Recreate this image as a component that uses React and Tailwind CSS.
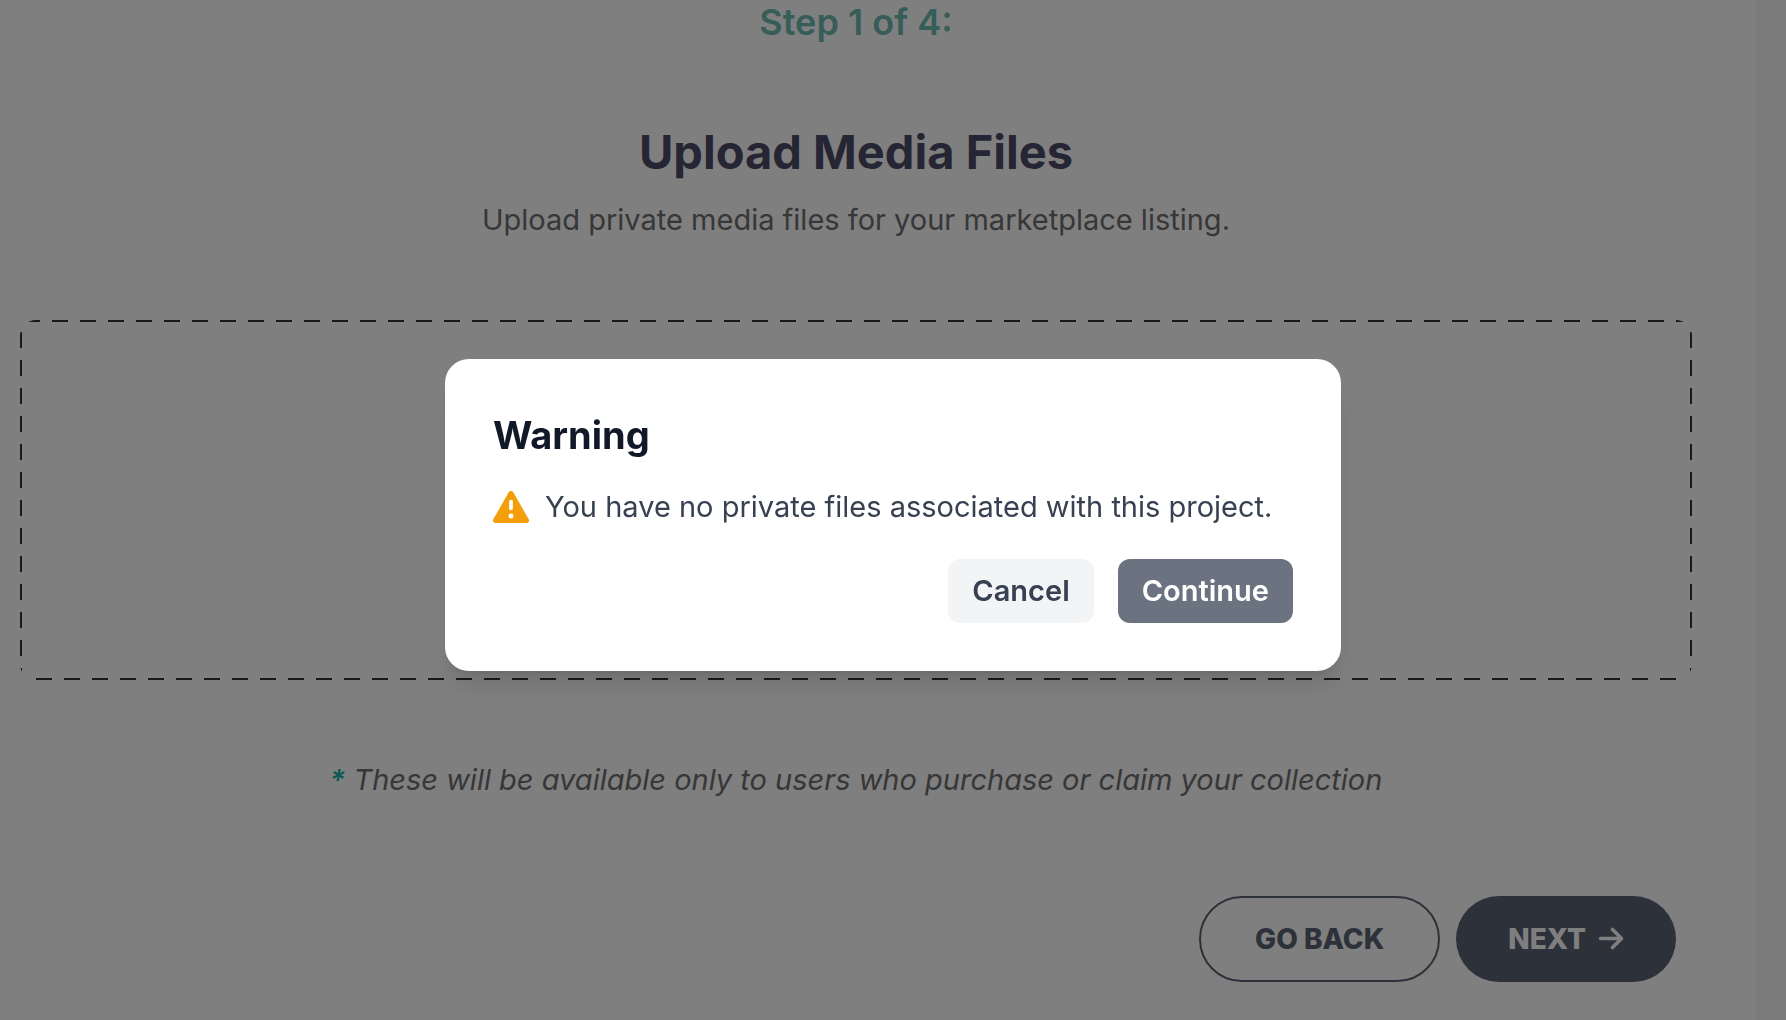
import React, { useState } from "react";

const WarningIcon = () => (
  <svg
    viewBox="0 0 36 32"
    className="w-9 h-8 shrink-0"
    fill="none"
    aria-hidden="true"
  >
    <path
      d="M20.3 1.3 35.7 28.3C36.6 30 35.6 32 33.6 32H2.4C.4 32-.6 30 .3 28.3L15.7 1.3C16.8-.4 19.2-.4 20.3 1.3Z"
      fill="#f59e0b"
    />
    <path
      d="M18 10.7v6.6"
      stroke="#fff"
      strokeWidth="3.8"
      strokeLinecap="round"
    />
    <circle cx="18" cy="25" r="2.5" fill="#fff" />
  </svg>
);

const ArrowIcon = () => (
  <svg
    viewBox="0 0 26 24"
    className="w-[26px] h-6 shrink-0"
    fill="none"
    stroke="currentColor"
    strokeWidth="3.6"
    strokeLinecap="round"
    strokeLinejoin="round"
    aria-hidden="true"
  >
    <path d="M2.5 11.5h21M14.5 2.5l9 9-9 9" />
  </svg>
);

const WarningDialog = ({ onClose }) => (
  <div className="fixed inset-0 z-10 flex items-center justify-center bg-black/50 pt-2.5">
    <div
      role="dialog"
      aria-modal="true"
      aria-labelledby="warning-title"
      className="w-full max-w-4xl rounded-3xl bg-white p-12 shadow-xl"
    >
      <h2
        id="warning-title"
        className="text-[38px] leading-14 font-bold text-[#111827]"
      >
        Warning
      </h2>
      <div className="mt-6 flex items-center gap-4">
        <WarningIcon />
        <p className="text-[29px] leading-10 whitespace-nowrap text-[#374151]">
          You have no private files associated with this project.
        </p>
      </div>
      <div className="mt-8 flex justify-end gap-6">
        <button
          type="button"
          onClick={onClose}
          className="h-16 rounded-xl bg-[#f3f4f6] px-6 text-[29px] leading-10 font-semibold text-[#374151]"
        >
          Cancel
        </button>
        <button
          type="button"
          onClick={onClose}
          className="h-16 rounded-xl bg-[#6b7280] px-6 text-[29px] leading-10 font-semibold text-white"
        >
          Continue
        </button>
      </div>
    </div>
  </div>
);

const App = () => {
  const [showWarning, setShowWarning] = useState(true);

  return (
    <div className="min-h-screen bg-[#f6f6f6] pr-[30px] font-['Inter',sans-serif]">
      <main className="min-h-screen bg-white pr-16 pb-9 pl-5">
        {/* Header */}
        <header className="text-center">
          <p className="text-[36px] leading-11 font-semibold text-[#6cbab0]">
            Step 1 of 4:
          </p>
          <h1 className="mt-20 text-[47px] leading-14 font-bold text-[#4d4a67]">
            Upload Media Files
          </h1>
          <p className="mt-5 text-[29px] leading-10 text-[#6e6e6e]">
            Upload private media files for your marketplace listing.
          </p>
        </header>

        {/* Drop zone */}
        <div className="relative mt-20 h-[360px] overflow-hidden rounded-2xl">
          <svg className="absolute inset-0 h-full w-full" aria-hidden="true">
            <rect
              width="100%"
              height="100%"
              fill="none"
              stroke="#333"
              strokeWidth="4"
              strokeDasharray="16 12"
              strokeDashoffset="24"
            />
          </svg>
        </div>

        <p className="mt-20 text-center text-[29px] leading-10 text-[#6e6e6e] italic">
          <span className="font-semibold text-[#14b8a6]">*</span> These will be
          available only to users who purchase or claim your collection
        </p>

        {/* Actions */}
        <div className="mt-24 flex justify-end gap-4 pr-4">
          <button
            type="button"
            className="h-[86px] rounded-full border-2 border-[#5b6275] px-[54px] text-[28px] leading-10 font-extrabold text-[#5b6275]"
          >
            GO BACK
          </button>
          <button
            type="button"
            onClick={() => setShowWarning(true)}
            className="flex h-[86px] items-center gap-3 rounded-full bg-[#5b6275] px-[52px] text-[28px] leading-10 font-extrabold text-white"
          >
            NEXT
            <ArrowIcon />
          </button>
        </div>
      </main>

      {showWarning && <WarningDialog onClose={() => setShowWarning(false)} />}
    </div>
  );
};

export default App;
